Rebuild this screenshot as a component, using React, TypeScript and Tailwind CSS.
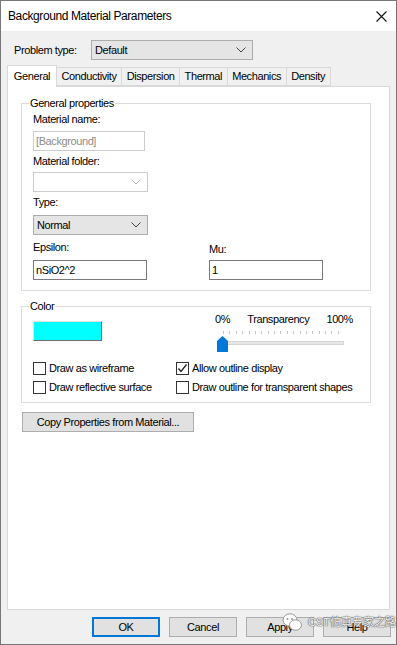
import { ReactNode } from 'react'

const font = { fontFamily: '"Liberation Sans", Arial, sans-serif' }

function Chevron({ disabled }: { disabled?: boolean }) {
  return (
    <svg width="10" height="6" viewBox="0 0 10 6" className="shrink-0">
      <path d="M0.5 0.5 L5 5 L9.5 0.5" fill="none" stroke={disabled ? '#b5b5b5' : '#404040'} strokeWidth="1" />
    </svg>
  )
}

function Combo({ value, width, variant }: { value: string; width: string; variant: 'gray' | 'disabled' }) {
  return (
    <div
      className={
        variant === 'gray'
          ? `${width} h-[20px] flex items-center justify-between border border-[#adadad] bg-[#e5e5e5] pl-[3px] pr-[6px]`
          : `${width} h-[20px] flex items-center justify-between border border-[#cccccc] bg-white pl-[3px] pr-[6px]`
      }
    >
      <span>{value}</span>
      <Chevron disabled={variant === 'disabled'} />
    </div>
  )
}

function TextBox({ value, disabled }: { value: string; disabled?: boolean }) {
  return (
    <div
      className={
        disabled
          ? 'w-[112px] h-[20px] flex items-center border border-[#cccccc] bg-white px-[2px] text-[#8d8d8d]'
          : 'w-[114px] h-[20px] flex items-center border border-[#7a7a7a] bg-white px-[2px]'
      }
    >
      {value}
    </div>
  )
}

function GroupBox({ title, className, children }: { title: string; className: string; children: ReactNode }) {
  return (
    <fieldset className={`border border-[#dcdcdc] ${className}`}>
      <legend className="-ml-[4px] px-[1px] leading-[13px]">{title}</legend>
      {children}
    </fieldset>
  )
}

function Check({ label, checked }: { label: string; checked?: boolean }) {
  return (
    <div className="flex items-center gap-[3px] h-[19px]">
      <div className="w-[13px] h-[13px] border border-[#333] bg-white flex items-center justify-center">
        {checked && (
          <svg width="11" height="11" viewBox="0 0 11 11">
            <path d="M1.5 5.5 L4 8.5 L9.5 1.5" fill="none" stroke="#222" strokeWidth="1.3" />
          </svg>
        )}
      </div>
      <span>{label}</span>
    </div>
  )
}

function Button({ label, focused }: { label: string; focused?: boolean }) {
  return (
    <div
      className={
        focused
          ? 'w-[68px] h-[20px] flex items-center justify-center border-2 border-[#0078d7] bg-[#e1e1e1]'
          : 'w-[68px] h-[20px] flex items-center justify-center border border-[#adadad] bg-[#e1e1e1]'
      }
    >
      {label}
    </div>
  )
}

const tabs = ['Conductivity', 'Dispersion', 'Thermal', 'Mechanics', 'Density']

export default function App() {
  return (
    <div
      className="relative w-[397px] h-[645px] border border-[#777] bg-[#f0f0f0] text-[11px] leading-[13px] tracking-[-0.4px] text-black flex flex-col overflow-hidden"
      style={font}
    >
      <div className="h-[30px] bg-white flex items-center justify-between pl-[7px] pr-[9px] shrink-0">
        <span className="text-[12px]">Background Material Parameters</span>
        <svg width="11" height="11" viewBox="0 0 11 11">
          <path d="M0.5 0.5 L10.5 10.5 M10.5 0.5 L0.5 10.5" stroke="#111" strokeWidth="1.1" />
        </svg>
      </div>

      <div className="flex items-center mt-[9px] pl-[13px]">
        <span className="w-[77px]">Problem type:</span>
        <Combo value="Default" width="w-[162px]" variant="gray" />
      </div>

      <div className="flex items-end mt-[5px] pl-[6px] h-[21px]">
        <div className="h-[22px] w-[50px] bg-white border border-b-0 border-[#d9d9d9] flex items-center justify-center relative z-10 -mb-px">
          General
        </div>
        {tabs.map((t) => (
          <div
            key={t}
            className="h-[19px] px-[4.5px] bg-[#f0f0f0] border border-l-0 border-[#d9d9d9] flex items-center"
          >
            {t}
          </div>
        ))}
      </div>

      <div className="ml-[6px] w-[383px] h-[524px] bg-white border border-[#d9d9d9] flex flex-col pl-[13px]">
        <GroupBox title="General properties" className="mt-[10px] w-[350px] h-[194px] pl-[11px]">
          <div className="mt-[3px]">Material name:</div>
          <div className="mt-[5px]">
            <TextBox value="[Background]" disabled />
          </div>
          <div className="mt-[4px]">Material folder:</div>
          <div className="mt-[4px]">
            <Combo value="" width="w-[115px]" variant="disabled" />
          </div>
          <div className="mt-[4px]">Type:</div>
          <div className="mt-[6px]">
            <Combo value="Normal" width="w-[115px]" variant="gray" />
          </div>
          <div className="flex mt-[6px]">
            <div className="w-[176px]">
              <div>Epsilon:</div>
              <div className="mt-[6px]">
                <TextBox value="nSiO2^2" />
              </div>
            </div>
            <div>
              <div className="mt-[2px]">Mu:</div>
              <div className="mt-[4px]">
                <TextBox value="1" />
              </div>
            </div>
          </div>
        </GroupBox>

        <GroupBox title="Color" className="mt-[9px] w-[350px] h-[103px] pl-[11px]">
          <div className="flex h-[46px]">
            <div className="w-[182px]">
              <div className="mt-[8px] w-[69px] h-[20px] bg-[#00ffff] border border-t-[#e3e3e3] border-l-[#e3e3e3] border-r-[#707070] border-b-[#707070]" />
            </div>
            <div className="w-[140px]">
              <div className="flex justify-between pr-[2px]">
                <span>0%</span>
                <span>Transparency</span>
                <span>100%</span>
              </div>
              <div className="flex justify-between ml-[8px] w-[116px] mt-[5px]">
                {Array.from({ length: 19 }).map((_, i) => (
                  <div key={i} className="w-px h-[3px] bg-[#c4c4c4]" />
                ))}
              </div>
              <div className="relative mt-[7px] ml-[8px] w-[121px] h-[4px] bg-[#e7e7e7] border border-[#d6d6d6]">
                <svg width="11" height="16" viewBox="0 0 11 16" className="absolute left-[-7px] top-[-6px]">
                  <path d="M0 5 L5.5 0 L11 5 L11 16 L0 16 Z" fill="#0078d7" />
                </svg>
              </div>
            </div>
          </div>
          <div className="flex">
            <div className="w-[143px]">
              <Check label="Draw as wireframe" />
              <Check label="Draw reflective surface" />
            </div>
            <div>
              <Check label="Allow outline display" checked />
              <Check label="Draw outline for transparent shapes" />
            </div>
          </div>
        </GroupBox>

        <div className="mt-[9px] ml-px w-[172px] h-[20px] flex items-center justify-center border border-[#adadad] bg-[#e1e1e1]">
          Copy Properties from Material...
        </div>
      </div>

      <div className="flex justify-end gap-[9px] pr-[5px] mt-[7px]">
        <Button label="OK" focused />
        <Button label="Cancel" />
        <Button label="Apply" />
        <Button label="Help" />
      </div>

      <div className="absolute left-[281px] top-[611px] flex items-center gap-[5px] pointer-events-none">
        <svg width="21" height="20" viewBox="0 0 21 20">
          <ellipse cx="8" cy="8" rx="7" ry="6.2" fill="#fff" stroke="#999" strokeWidth="1" />
          <ellipse cx="13.5" cy="13" rx="6" ry="5.2" fill="#fff" stroke="#999" strokeWidth="1" />
          <circle cx="5.5" cy="7" r="1" fill="#999" />
          <circle cx="10" cy="7" r="1" fill="#999" />
        </svg>
        <span
          className="text-[11px] tracking-normal text-[#f4f4f4] [text-shadow:0_0_1px_#555,0_0_1px_#555,0_0_2px_#888]"
          style={{ fontFamily: '"Liberation Sans", "Noto Sans CJK SC", sans-serif' }}
        >
          CST仿真专家之路
        </span>
      </div>
    </div>
  )
}
